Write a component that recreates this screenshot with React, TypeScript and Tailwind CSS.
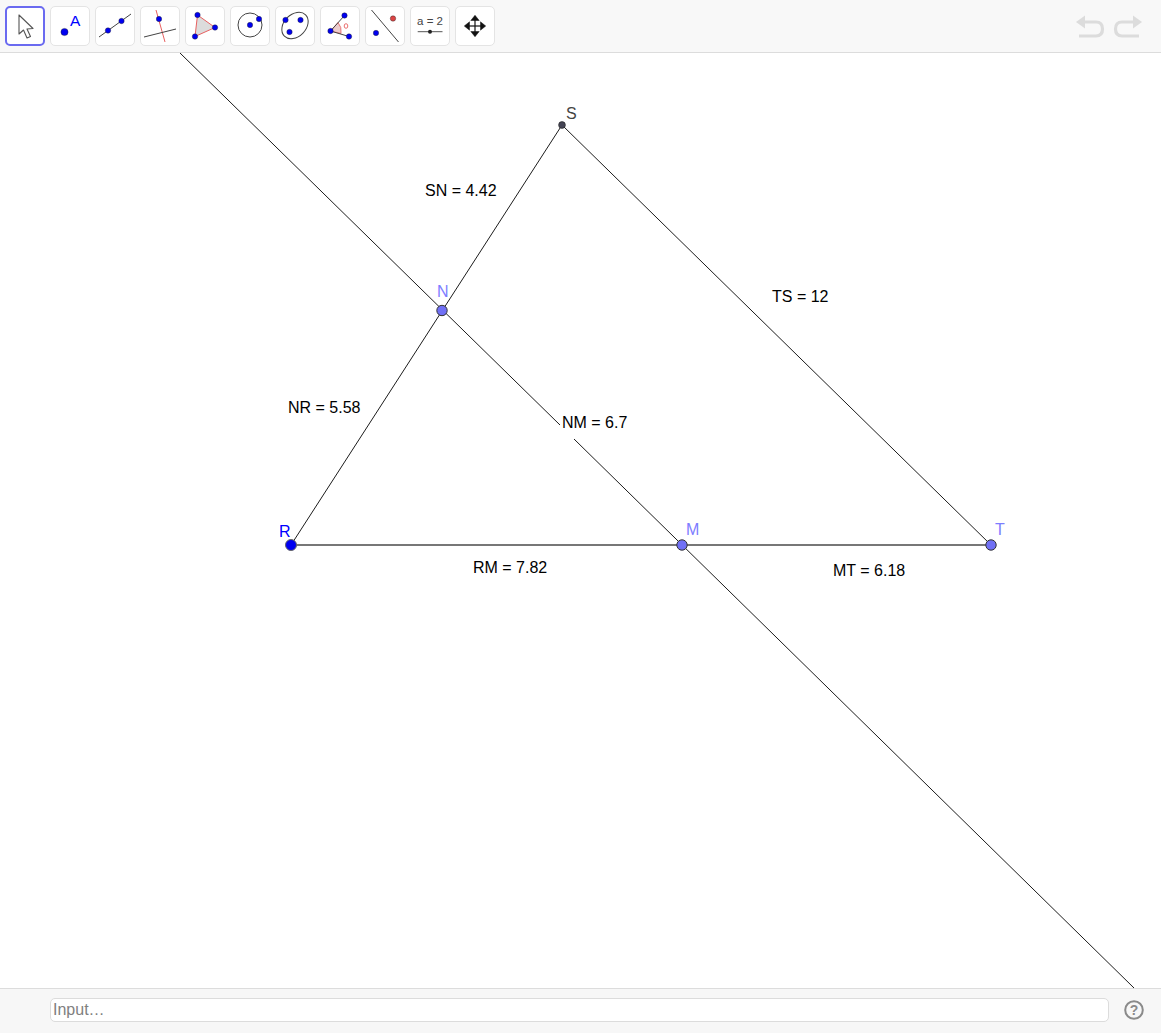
import React from 'react';

const BLUE = '#0000ff';
const LINE = '#1c1c1c';

const Dot = ({ x, y, r = 2.7, fill = '#0000f0' }: { x: number; y: number; r?: number; fill?: string }) => (
  <circle cx={x} cy={y} r={r} fill={fill} stroke="#222" strokeWidth={0.4} />
);

const toolIcons: React.ReactNode[] = [
  <path key="a" d="M14 9 L14 28 L18.5 24 L22 32 L25.5 30.5 L22 23 L28 22.5 Z" fill="#fff" stroke="#555" strokeWidth={1.1} strokeLinejoin="round" />,
  <g key="b">
    <Dot x={14.5} y={26} r={3.6} />
    <text x={20} y={20} fontSize={15.5} fill={BLUE} fontFamily="Liberation Sans, sans-serif">A</text>
  </g>,
  <g key="c">
    <line x1={4} y1={31} x2={36} y2={8} stroke="#444" strokeWidth={1} />
    <Dot x={13} y={24.5} />
    <Dot x={26.5} y={15} />
  </g>,
  <g key="d">
    <line x1={16} y1={4} x2={25} y2={36} stroke="#e86060" strokeWidth={1} />
    <line x1={4} y1={31} x2={36} y2={23} stroke="#444" strokeWidth={1} />
    <Dot x={19} y={13} />
  </g>,
  <g key="e">
    <polygon points="12.5,9 30,21.5 10,30.5" fill="#dcdcdc" stroke="#e86060" strokeWidth={1} />
    <Dot x={12.5} y={9} />
    <Dot x={30} y={21.5} />
    <Dot x={10} y={30.5} />
  </g>,
  <g key="f">
    <circle cx={20} cy={19} r={12} fill="none" stroke="#444" strokeWidth={1} />
    <Dot x={20} y={19} />
    <Dot x={29} y={13} />
  </g>,
  <g key="g">
    <ellipse cx={20} cy={19.5} rx={15} ry={11} transform="rotate(-45 20 19.5)" fill="none" stroke="#444" strokeWidth={1} />
    <Dot x={10.5} y={14} />
    <Dot x={25.5} y={14} />
    <Dot x={14.5} y={26} />
  </g>,
  <g key="h">
    <path d="M10.5 25 L18 16.5 Q22 21 21 27.5 Z" fill="#eccccc" stroke="#e86060" strokeWidth={0.8} />
    <line x1={10.5} y1={25} x2={24.5} y2={9.5} stroke="#444" strokeWidth={1} />
    <line x1={10.5} y1={25} x2={29} y2={30.5} stroke="#444" strokeWidth={1} />
    <Dot x={10.5} y={25} />
    <Dot x={24.5} y={9.5} />
    <Dot x={29} y={30.5} />
    <ellipse cx={26} cy={20} rx={1.8} ry={2.3} fill="none" stroke="#e86060" strokeWidth={0.9} />
  </g>,
  <g key="i">
    <line x1={6.5} y1={4} x2={33.5} y2={36} stroke="#444" strokeWidth={1} />
    <Dot x={28} y={12.5} fill="#dd4444" />
    <Dot x={11} y={27} />
  </g>,
  <g key="j">
    <text x={20} y={19} textAnchor="middle" fontSize={11.5} fill="#444" fontFamily="Liberation Sans, sans-serif">a = 2</text>
    <line x1={7.7} y1={25.7} x2={32.5} y2={25.7} stroke="#555" strokeWidth={1} />
    <circle cx={20} cy={25.7} r={2} fill="#222" />
  </g>,
  <g key="k" fill="#111" stroke="#111">
    <line x1={20} y1={11} x2={20} y2={29} strokeWidth={1.2} />
    <line x1={11} y1={20} x2={29} y2={20} strokeWidth={1.2} />
    <polygon points="20,9.3 15.8,14.5 24.2,14.5" strokeWidth={0.5} />
    <polygon points="20,30.7 15.8,25.5 24.2,25.5" strokeWidth={0.5} />
    <polygon points="9.3,20 14.5,15.8 14.5,24.2" strokeWidth={0.5} />
    <polygon points="30.7,20 25.5,15.8 25.5,24.2" strokeWidth={0.5} />
  </g>,
];

const measures = [
  { text: 'SN = 4.42', cls: 'left-[425px] top-[126px]' },
  { text: 'TS = 12', cls: 'left-[772px] top-[232px]' },
  { text: 'NR = 5.58', cls: 'left-[288px] top-[343px]' },
  { text: 'NM = 6.7', cls: 'left-[562px] top-[358px]' },
  { text: 'RM = 7.82', cls: 'left-[473px] top-[503px]' },
  { text: 'MT = 6.18', cls: 'left-[833px] top-[506px]' },
];

const pointLabels = [
  { text: 'S', cls: 'left-[566px] top-[49px] text-[#444444]' },
  { text: 'N', cls: 'left-[437px] top-[227px] text-[#7d7dff]' },
  { text: 'R', cls: 'left-[279px] top-[467px] text-[#0000ff]' },
  { text: 'M', cls: 'left-[686px] top-[465px] text-[#7d7dff]' },
  { text: 'T', cls: 'left-[995px] top-[465px] text-[#7d7dff]' },
];

const points = [
  { x: 442, y: 310.5 },
  { x: 682, y: 545 },
  { x: 991, y: 545 },
];

export default function App() {
  return (
    <div className="flex h-[1033px] w-full flex-col overflow-hidden bg-white font-['Liberation_Sans',sans-serif]">
      <div className="flex h-[53px] shrink-0 items-start justify-between border-b border-[#dcdcdc] bg-[#f8f8f8] pl-[5px] pt-[6px]">
        <div className="flex gap-[5px]">
          {toolIcons.map((icon, i) => (
            <button
              key={i}
              className={`h-10 w-10 rounded-[5px] bg-white ${i === 0 ? 'border-2 border-[#6a6af0]' : 'border border-[#e4e4e4]'}`}
            >
              <svg width="40" height="40" viewBox="0 0 40 40" className={i === 0 ? '-m-[2px]' : '-m-px'}>
                {icon}
              </svg>
            </button>
          ))}
        </div>
        <div className="mr-[19px] mt-[9px] flex gap-[8px]">
          <svg width="29" height="24" viewBox="0 0 29 24" fill="none">
            <path d="M8 7 H20 Q26.5 7 26.5 14 Q26.5 21 20 21 H3" stroke="#dcdcdc" strokeWidth={3.2} />
            <polygon points="0,7 9,0.5 9,13.5" fill="#dcdcdc" />
          </svg>
          <svg width="29" height="24" viewBox="0 0 29 24" fill="none">
            <path d="M21 7 H9 Q2.5 7 2.5 14 Q2.5 21 9 21 H26" stroke="#dcdcdc" strokeWidth={3.2} />
            <polygon points="29,7 20,0.5 20,13.5" fill="#dcdcdc" />
          </svg>
        </div>
      </div>

      <div className="relative flex-1 overflow-hidden bg-white">
        <svg className="absolute inset-0" width="1161" height="935" viewBox="0 53 1161 935" fill="none">
          <line x1={180} y1={53} x2={560} y2={425} stroke={LINE} strokeWidth={1} />
          <line x1={574} y1={439} x2={1134} y2={988} stroke={LINE} strokeWidth={1} />
          <line x1={562} y1={125} x2={291} y2={545} stroke={LINE} strokeWidth={1} />
          <line x1={562} y1={125} x2={991} y2={545} stroke={LINE} strokeWidth={1} />
          <line x1={291} y1={545} x2={991} y2={545} stroke="#777777" strokeWidth={2} />
          <circle cx={562} cy={125} r={3.4} fill="#444455" stroke="#222" strokeWidth={0.6} />
          {points.map(p => (
            <circle key={p.x} cx={p.x} cy={p.y} r={5.2} fill="#7070f5" stroke="#333" strokeWidth={1} />
          ))}
          <circle cx={291} cy={545} r={5.5} fill="#0000f0" stroke="#666" strokeWidth={1} />
        </svg>
        {pointLabels.map(l => (
          <span key={l.text} className={`absolute text-base ${l.cls}`}>{l.text}</span>
        ))}
        {measures.map(m => (
          <span key={m.text} className={`absolute text-base text-black ${m.cls}`}>{m.text}</span>
        ))}
      </div>

      <div className="flex h-[45px] shrink-0 items-start border-t border-[#dcdcdc] bg-[#f7f7f7] pl-[50px] pt-[9px]">
        <input
          placeholder="Input…"
          className="h-6 w-[1059px] rounded-[5px] border border-[#dcdcdc] bg-white px-[2px] text-base text-[#666666] outline-none placeholder:text-[#808080]"
        />
        <svg width="22" height="22" viewBox="0 0 22 22" className="ml-[14px] mt-px" fill="none">
          <circle cx={11} cy={11} r={8.8} stroke="#8a8a8a" strokeWidth={2} />
          <text x={11} y={16} textAnchor="middle" fontSize={14} fontWeight="bold" fill="#8a8a8a" fontFamily="Liberation Sans, sans-serif">?</text>
        </svg>
      </div>
    </div>
  );
}
